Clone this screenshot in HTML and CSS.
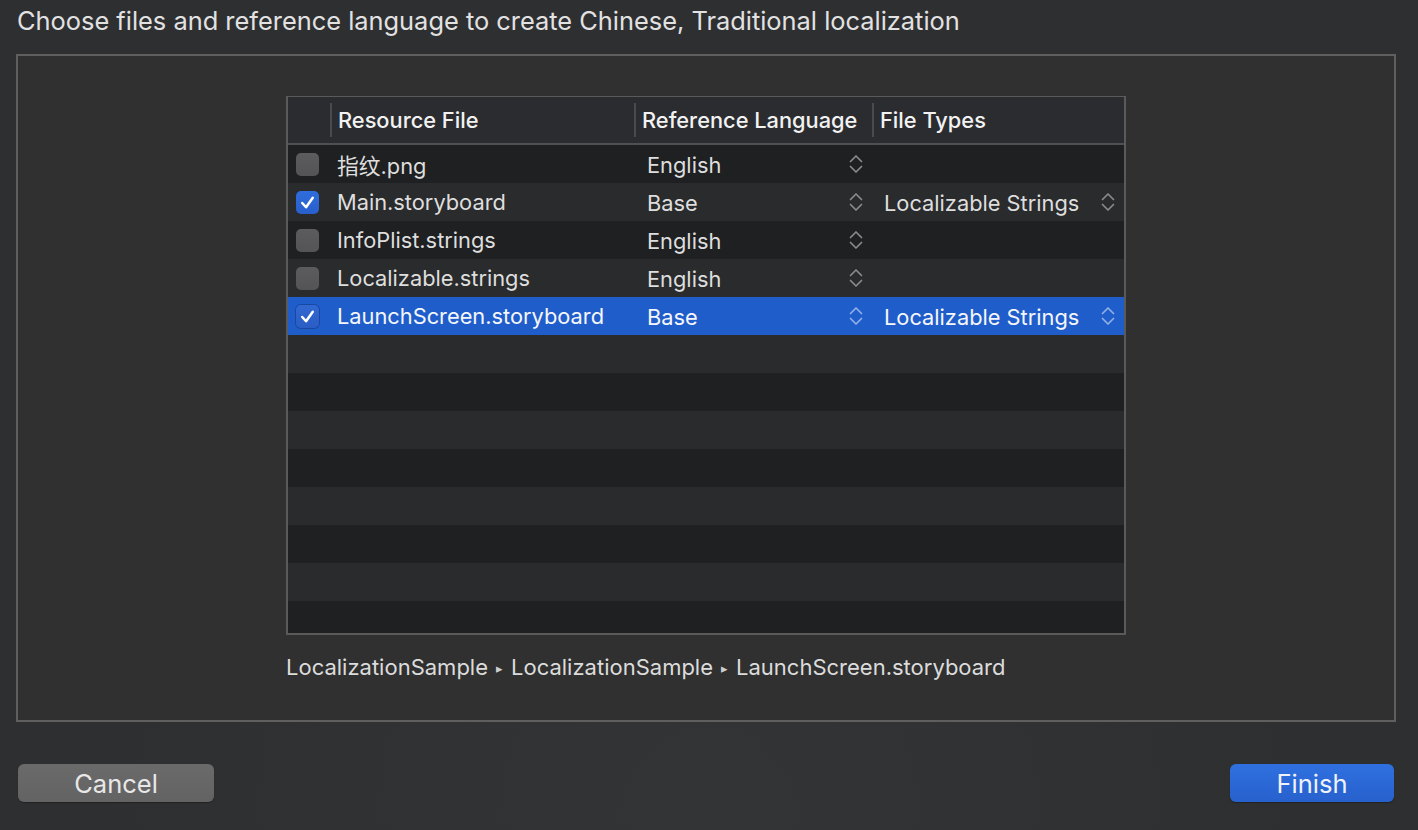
FILE: index.html
```html
<!DOCTYPE html>
<html>
<head>
<meta charset="utf-8">
<link rel="stylesheet" href="styles.css">
</head>
<body>
<div class="sheet">
  <div class="title">Choose files and reference language to create Chinese, Traditional localization</div>
  <div class="box">
    <div class="table">
      <div class="head">
        <div class="hc hc-check"></div>
        <div class="hc sep">Resource File</div>
        <div class="hc sep">Reference Language</div>
        <div class="hc sep">File Types</div>
      </div>
      <div class="rows">
        <div class="row odd">
          <div class="c-check"><span class="cb"></span></div>
          <div class="c-name">指纹.png</div>
          <div class="c-pop c-lang"><span>English</span><svg class="arr" viewBox="0 0 14 20"><path d="M1.5 7.5 7 2l5.5 5.5M1.5 12.5 7 18l5.5-5.5"/></svg></div>
          <div class="c-pop c-type"></div>
        </div>
        <div class="row even">
          <div class="c-check"><span class="cb on"><svg viewBox="0 0 24 24"><path d="M6.5 12.5l4 4.5 7-10"/></svg></span></div>
          <div class="c-name">Main.storyboard</div>
          <div class="c-pop c-lang"><span>Base</span><svg class="arr" viewBox="0 0 14 20"><path d="M1.5 7.5 7 2l5.5 5.5M1.5 12.5 7 18l5.5-5.5"/></svg></div>
          <div class="c-pop c-type"><span>Localizable Strings</span><svg class="arr" viewBox="0 0 14 20"><path d="M1.5 7.5 7 2l5.5 5.5M1.5 12.5 7 18l5.5-5.5"/></svg></div>
        </div>
        <div class="row odd">
          <div class="c-check"><span class="cb"></span></div>
          <div class="c-name">InfoPlist.strings</div>
          <div class="c-pop c-lang"><span>English</span><svg class="arr" viewBox="0 0 14 20"><path d="M1.5 7.5 7 2l5.5 5.5M1.5 12.5 7 18l5.5-5.5"/></svg></div>
          <div class="c-pop c-type"></div>
        </div>
        <div class="row even">
          <div class="c-check"><span class="cb"></span></div>
          <div class="c-name">Localizable.strings</div>
          <div class="c-pop c-lang"><span>English</span><svg class="arr" viewBox="0 0 14 20"><path d="M1.5 7.5 7 2l5.5 5.5M1.5 12.5 7 18l5.5-5.5"/></svg></div>
          <div class="c-pop c-type"></div>
        </div>
        <div class="row sel">
          <div class="c-check"><span class="cb on"><svg viewBox="0 0 24 24"><path d="M6.5 12.5l4 4.5 7-10"/></svg></span></div>
          <div class="c-name">LaunchScreen.storyboard</div>
          <div class="c-pop c-lang"><span>Base</span><svg class="arr" viewBox="0 0 14 20"><path d="M1.5 7.5 7 2l5.5 5.5M1.5 12.5 7 18l5.5-5.5"/></svg></div>
          <div class="c-pop c-type"><span>Localizable Strings</span><svg class="arr" viewBox="0 0 14 20"><path d="M1.5 7.5 7 2l5.5 5.5M1.5 12.5 7 18l5.5-5.5"/></svg></div>
        </div>
        <div class="row even"></div>
        <div class="row odd"></div>
        <div class="row even"></div>
        <div class="row odd"></div>
        <div class="row even"></div>
        <div class="row odd"></div>
        <div class="row even"></div>
        <div class="row odd"></div>
      </div>
    </div>
    <div class="path">LocalizationSample<span class="tri">▸</span>LocalizationSample<span class="tri">▸</span>LaunchScreen.storyboard</div>
  </div>
  <div class="buttons">
    <div class="btn cancel">Cancel</div>
    <div class="btn finish">Finish</div>
  </div>
</div>
</body>
</html>
```

FILE: styles.css
```css
html, body {
  margin: 0;
  padding: 0;
}
body {
  width: 1418px;
  height: 830px;
  overflow: hidden;
  background: #2e2f31;
  font-family: "Inter", "Liberation Sans", "Noto Sans CJK SC", sans-serif;
  color: #e4e4e4;
}
.sheet {
  display: flex;
  flex-direction: column;
  height: 830px;
  background: radial-gradient(ellipse at 50% 100%, #333436 0%, #2e2f31 60%);
}
.title {
  height: 54px;
  box-sizing: border-box;
  padding: 5px 0 0 17px;
  font-size: 25.4px;
  line-height: 32px;
  color: #e2e2e2;
}
.box {
  margin-left: 16px;
  width: 1380px;
  height: 668px;
  box-sizing: border-box;
  border: 2px solid #5f5f5f;
  background: #303030;
  padding: 40px 0 0 268px;
}
.table {
  width: 840px;
  height: 539px;
  box-sizing: border-box;
  border: 2px solid #5a5a5b;
  border-top-width: 1px;
  overflow: hidden;
  background: #2a2b2d;
}
.head {
  display: grid;
  grid-template-columns: 42px 304px 238px 252px;
  height: 46px;
  background: #2b2c2f;
  border-bottom: 2px solid #4f5053;
}
.hc {
  display: flex;
  align-items: center;
  padding-left: 8px;
  font-size: 21.8px;
  font-weight: 500;
  color: #f2f2f2;
}
.hc.sep {
  background: linear-gradient(#4a4b4e, #4a4b4e) left center / 2px 34px no-repeat;
}
.rows {
  display: flex;
  flex-direction: column;
}
.row {
  display: grid;
  grid-template-columns: 42px 304px 238px 252px;
  height: 38px;
  flex: none;
  font-size: 21.8px;
  color: #dedede;
}
.row.odd { background: #1f2022; }
.row.even { background: #2a2b2d; }
.row.sel { background: #1f5dca; color: #f4f6fb; }
.c-check {
  display: flex;
  align-items: center;
  padding-left: 8px;
}
.cb {
  width: 23px;
  height: 23px;
  box-sizing: border-box;
  border-radius: 5px;
  background: linear-gradient(#5c5c5e, #545456);
  display: flex;
}
.cb.on {
  background: linear-gradient(#2f6ddc, #285fcb);
}
.sel .cb.on {
  background: linear-gradient(#3268d3, #2a5dc4);
  box-shadow: 0 0 0 1px rgba(20, 50, 120, 0.5);
}
.cb svg {
  width: 23px;
  height: 23px;
  fill: none;
  stroke: #ffffff;
  stroke-width: 2.6;
  stroke-linecap: round;
  stroke-linejoin: round;
}
.c-name {
  display: flex;
  align-items: center;
  padding-left: 7px;
}
.c-pop {
  display: flex;
  align-items: center;
  justify-content: space-between;
}
.c-pop span {
  padding-top: 2px;
}
.c-lang {
  padding: 0 9px 0 13px;
}
.c-type {
  padding: 0 9px 0 12px;
}
.arr {
  width: 14px;
  height: 20px;
  fill: none;
  stroke: #8a8a8c;
  stroke-width: 1.7;
  stroke-linecap: round;
  stroke-linejoin: round;
}
.sel .arr {
  stroke: #8fb0e8;
}
.path {
  margin-top: 18px;
  font-size: 22px;
  line-height: 28px;
  color: #dcdcdc;
}
.tri {
  font-size: 13px;
  vertical-align: 2px;
  color: #cfcfcf;
  margin: 0 8px 0 8px;
}
.buttons {
  display: flex;
  justify-content: space-between;
  padding: 42px 24px 0 18px;
}
.btn {
  height: 38px;
  box-sizing: border-box;
  border-radius: 6px;
  display: flex;
  align-items: center;
  justify-content: center;
  font-size: 25.5px;
}
.cancel {
  width: 196px;
  background: linear-gradient(#6a6a6a, #636363);
  color: #e8e8e8;
  box-shadow: 0 1px 1px rgba(0,0,0,0.3);
}
.finish {
  width: 164px;
  background: linear-gradient(#2f70e0, #2761cd);
  color: #eef2fb;
  box-shadow: 0 1px 1px rgba(0,0,0,0.3);
}
```
